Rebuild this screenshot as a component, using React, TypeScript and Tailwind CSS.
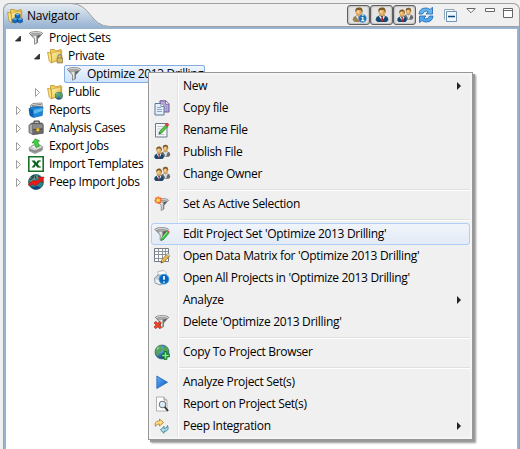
import React from "react";

type IconProps = { children: React.ReactNode };

function Icon({ children }: IconProps) {
  return (
    <svg width="16" height="16" viewBox="0 0 16 16" className="block shrink-0 overflow-visible">
      {children}
    </svg>
  );
}

function Defs() {
  return (
    <svg width="0" height="0" className="absolute">
      <defs>
        <linearGradient id="steel" x1="0" x2="1">
          <stop offset="0" stopColor="#686868" />
          <stop offset=".45" stopColor="#f2f2f2" />
          <stop offset=".65" stopColor="#5a5a5a" />
          <stop offset="1" stopColor="#4d4d4d" />
        </linearGradient>
        <linearGradient id="gold" x1="0" x2="1" y2="1">
          <stop offset="0" stopColor="#fff3b0" />
          <stop offset="1" stopColor="#e8b93a" />
        </linearGradient>
        <linearGradient id="play" x1="0" x2="1" y2="1">
          <stop offset="0" stopColor="#62b0f8" />
          <stop offset="1" stopColor="#0a5cc8" />
        </linearGradient>
        <linearGradient id="tab" x1="0" x2="0" y1="0" y2="1">
          <stop offset="0" stopColor="#e6edf5" />
          <stop offset="1" stopColor="#99b4d1" />
        </linearGradient>
        <radialGradient id="globe" cx=".35" cy=".3" r=".8">
          <stop offset="0" stopColor="#9fcdf5" />
          <stop offset=".5" stopColor="#3474b8" />
          <stop offset="1" stopColor="#123968" />
        </radialGradient>
      </defs>
    </svg>
  );
}

function FunnelShape() {
  return (
    <>
      <path d="M1.500 3.500 6.500 9v5.200l3-1.500V9l5-5.500z" fill="url(#steel)" stroke="#666" strokeWidth=".7" />
      <ellipse cx="8" cy="3.400" rx="6.600" ry="1.800" fill="#e9e9e9" stroke="#777" strokeWidth=".8" />
      <ellipse cx="8" cy="3.700" rx="4.800" ry="1" fill="#a3a3a3" />
    </>
  );
}

const Funnel = () => (
  <Icon>
    <FunnelShape />
  </Icon>
);

function FolderShape() {
  return (
    <>
      <path d="M3.500 4V1.500h4l1 1.500 5.500-1.500.7 1v9L4 14.500z" fill="#f2cc5b" stroke="#b78a1e" strokeWidth=".7" />
      <path d="M4.500 5 13.700 3v8.500L4.700 14.600z" fill="url(#gold)" stroke="#c99b28" strokeWidth=".6" />
      <path d="M.6 4.200 4 5.300l.8 9.800-2.600-2z" fill="#ffe780" stroke="#b88a1a" strokeWidth=".7" />
    </>
  );
}

const NavIcon = () => (
  <Icon>
    <FolderShape />
    <path d="m10.500 5.500 2.500 1v3l-2.500 1-2.500-1v-3zM8 10l2.500 1v3L8 15l-2.500-1v-3zM13 10l2.500 1v3L13 15l-2.500-1v-3z" fill="#1469bd" stroke="#073e83" strokeWidth=".5" />
    <path d="m8 6.500 2.500-1 2.500 1-2.500 1zM5.500 11 8 10l2.500 1L8 12zM10.500 11l2.500-1 2.500 1-2.500 1z" fill="#61b7ef" />
  </Icon>
);

const PrivateFolder = () => (
  <Icon>
    <FolderShape />
    <path d="M11 10V8.500a1.800 1.800 0 0 1 3.600 0V10" fill="none" stroke="#888" strokeWidth="1.200" />
    <path d="M10.200 10h5.300v5h-5.300z" fill="#c9b15a" stroke="#7d6c2c" strokeWidth=".6" />
    <path d="M11 11.500h4M11 13h4" stroke="#e8d48c" strokeWidth=".6" />
  </Icon>
);

function GlobeShape({ small = false }: { small?: boolean }) {
  return (
    <g transform={small ? "translate(7.500 7.500) scale(.54)" : undefined}>
      <circle cx="8" cy="8" r="7" fill="url(#globe)" stroke="#315e75" strokeWidth=".7" />
      <path d="M2 5c2-3 4-4 6-4l-1 3 2 1-2 3-3-.5L5 10l-1 3C1.500 10 1 7.500 2 5zM10 3l2-1c3 2 3.500 7 1 10l-3 .5-1-2 2-2-1.500-2.500z" fill="#52a551" />
      <path d="m3 4 2-1 .5 1L3 6z" fill="#a7d691" />
    </g>
  );
}

const PublicFolder = () => (
  <Icon>
    <FolderShape />
    <GlobeShape small />
  </Icon>
);

const ReportsIcon = () => (
  <Icon>
    <path d="M2.500 6V3.500L5 1.500l9-.5.500 5z" fill="#eee" stroke="#777" strokeWidth=".8" />
    <path d="m3.500 3.500 9.500-1M3.500 5l10-.8" stroke="#777" />
    <path d="M1 6.500 4.500 5H15l-.8 8.500-8.700 2-3.500-2z" fill="#1c86da" stroke="#0867ae" strokeWidth=".7" />
    <path d="M5.500 8 14.800 6l-.4 3-8.700 3z" fill="#5bb9f0" />
    <path d="M1 6.500 5.300 8v7.500L2 13.500z" fill="#0a5faf" />
  </Icon>
);

const CaseIcon = () => (
  <Icon>
    <path d="M6 3.500V2q0-.8.800-.8h3.700q.8 0 .8.800v1.500" fill="none" stroke="#464646" strokeWidth="1.200" />
    <path d="M1 5.500 3.500 3H14l1.200 1.500v8.700L5 14.700 1 12.500z" fill="#6a6a6a" stroke="#474747" strokeWidth=".7" />
    <path d="m1.500 5.700 2.700-2v10.300L1.500 12.300z" fill="#aaa" />
    <path d="M4.800 4.300h9.700v4.300l-9.700.7z" fill="#8b8b8b" />
    <path d="m4.800 9.500 9.900-.7" stroke="#333" strokeWidth=".6" />
    <path d="M8.300 8.300h3v2.500l-1.500 1-1.500-1z" fill="#ffc733" stroke="#a67613" strokeWidth=".4" />
  </Icon>
);

const ExportIcon = () => (
  <Icon>
    <path d="m1 10 4-3h7l3 2-1 3.500-7 3L1.500 13z" fill="#d2d2d2" stroke="#888" strokeWidth=".8" />
    <path d="m1.500 10.500 5.500 2 7-3v2.500l-7 3-5.500-2.500z" fill="#8d8d8d" />
    <path d="m4 9 4-2 5 1.500-5.500 2z" fill="#eee" />
    <path d="M4 5 7.500.8 11.500 3l-2 .7 2 4.500-3.500 1.300-2-5z" fill="#42d342" stroke="#188d22" strokeWidth=".7" />
  </Icon>
);

const ExcelIcon = () => (
  <Icon>
    <path d="M.8.8h14.400v14.400H.800z" fill="#fff" stroke="#167326" strokeWidth="1.600" />
    <path d="M3.500 4.500h3.300L8.200 6.800 9.700 4.500h2.800L9.600 8l2.900 3.500H9.200L7.700 9.300 6.300 11.500H3.500L6.500 8z" fill="#08621b" />
    <path d="M10.500 5H13M10.800 11H13" stroke="#3b8149" />
  </Icon>
);

const PeepIcon = () => (
  <Icon>
    <circle cx="8" cy="8" r="7.500" fill="#298483" stroke="#164a4f" strokeWidth=".7" />
    <path d="m2 4 3-2 4-.5 1 2-3 1.500-2 3L2 7zM8 2l4-.5L15 5l-2 1-3-1z" fill="#7a9a8e" />
    <path d="M3 3 6 1.500M10 2l3 2M2 6l4-3M7 1.500l1 3" stroke="#173b4b" strokeWidth="1.200" />
    <path d="m2 11.500 4 1.500 3-1 4 1.500-4 1.700H6z" fill="#123e80" />
    <path d="m.5 10 5-4L7.500 7.500l4-2.500-1.500-1.500 6-.5-2 6-1.300-1.500-5.700 4.500-2-2-4 2z" fill="#f01717" stroke="#9d1010" strokeWidth=".5" />
  </Icon>
);

function PersonShape({ grey = false, gold = false }: { grey?: boolean; gold?: boolean }) {
  return (
    <>
      <path d="M1.500 13 2.500 10 6 8.300h4L13.500 10l1 3-2 2h-9z" fill={grey ? "#6c6c6c" : gold ? "#9b8352" : "#17486f"} />
      <path d="m6 8.500 2 2 2-2 1 1-2.800 4.500L5 9.500z" fill="#e4edf5" />
      <path d="m7.500 9.500 1.200.1.600 4-1.200 1.400-1-1.400z" fill={grey ? "#ddd" : "#b62128"} />
      <ellipse cx="8" cy="4.800" rx="3.400" ry="4.200" fill="#dba55d" />
      <path d="M4.500 5Q3.500 1 7 .8q4-1.400 4.700 3L11.300 6 10 3 6.500 3z" fill="#7a5a2a" />
      <path d="M5.700 3.500 8.500 3v4L6 6z" fill="#f5cf8c" />
    </>
  );
}

const People = () => (
  <Icon>
    <g transform="translate(5.600 .3) scale(.74 .83)"><PersonShape grey /></g>
    <g transform="translate(-1 2) scale(.76 .87)"><PersonShape /></g>
  </Icon>
);
const Person = () => <Icon><PersonShape /></Icon>;
const PersonInfo = () => (
  <Icon>
    <PersonShape gold />
    <circle cx="11.500" cy="11.500" r="4.200" fill="#1f72b5" stroke="#a7cce5" strokeWidth=".7" />
    <path d="M10.500 10.500h1.300v3M10.300 13.700h3M11.200 8.500h1.200" stroke="white" strokeWidth="1.200" fill="none" />
  </Icon>
);

const CopyIcon = () => (
  <Icon>
    <path d="M6 .8h6l3 3V12H6z" fill="#b7a6d8" stroke="#705796" />
    <path d="M11.500 1v3.300H15" fill="#eee" stroke="#705796" strokeWidth=".7" />
    <path d="M1 3.500h6l3 3V15H1z" fill="#e5eff9" stroke="#5d789b" />
    <path d="M7 3.500v3h3" fill="#fff" stroke="#5d789b" strokeWidth=".8" />
    <path d="M3 7.500h4M3 9.500h5M3 11.500h5M12.500 6.500v4" stroke="#8ba4c2" />
  </Icon>
);

const RenameIcon = () => (
  <Icon>
    <path d="M1.500 1.500h11.500v13.500H1.500z" fill="#f4f6f8" stroke="#6b7889" />
    <path d="M3.500 4.500h6M3.500 7h4M3.500 10h3M3.500 12.500h7" stroke="#b9c8da" />
    <path d="m5 12 1-3 6-6.500 2 1.800-6.300 6.700z" fill="#55c63c" stroke="#2f832a" strokeWidth=".7" />
    <path d="m11.300 3 1.300-1.500q1.500-.6 2.200 1.200l-1.500 1.800z" fill="#ee493e" stroke="#b32121" strokeWidth=".6" />
    <path d="m5 12 .6-1.600 1.200 1.100z" fill="#27332a" />
  </Icon>
);

const ActiveIcon = () => (
  <Icon>
    <g transform="translate(1.500 1) scale(.88 .95)"><FunnelShape /></g>
    <circle cx="4.200" cy="4.200" r="3.600" fill="#f58a4a" opacity=".6" />
    <path d="m4.200.3 1 1.900 2-.8-.8 2 2 .8-2 .9.8 2-2-.8-1 2-1-2-2 .8.800-2-2-.9 2-.8-.8-2 2 .8z" fill="#ef5720" />
    <circle cx="4.200" cy="4.200" r="2" fill="#ffd654" />
  </Icon>
);

const EditIcon = () => (
  <Icon>
    <g transform="translate(-.3 0)"><FunnelShape /></g>
    <path d="m7 14.800 1-3.300 4.800-6.300 2.300 1.700-5.300 6.500z" fill="#39be43" stroke="#1f8730" strokeWidth=".6" />
    <path d="m12.800 5.200 1-.9 1.900 1.500-.6 1.200z" fill="#ed3f37" />
    <path d="m8.500 11.800 4.700-6" stroke="#9cf297" />
  </Icon>
);

const MatrixIcon = () => (
  <Icon>
    <path d="M.5.500h14v13H.500z" fill="#fff" stroke="#707985" />
    <path d="M4.500.5v13M8.500.5v13M11.500.5v13M.5 3.500h14M.5 6.500h14M.5 10.500h14" stroke="#8b929b" />
    <path d="m7 15 .7-3 5.500-6.200L15.500 8 10 14z" fill="#e7bd52" stroke="#98732c" strokeWidth=".8" />
    <path d="m12.500 6.500 1.200-1.200L16 7.300 14.900 8.500z" fill="#d9d9d9" stroke="#888" strokeWidth=".4" />
    <path d="m7 15 .4-1.700 1.200 1.200z" fill="#333" />
  </Icon>
);

const OpenIcon = () => (
  <Icon>
    <path d="M4 6V1.500l6-1 2 2V7" fill="#fff" stroke="#9aaaba" strokeWidth=".8" />
    <path d="m.5 8 3.500-3h8l1 7-7 3-5-2z" fill="#c1cad4" stroke="#808c99" strokeWidth=".8" />
    <path d="m1.500 9 4.500 1.500v3.700L1.500 12.500z" fill="#edf1f5" />
    <circle cx="10" cy="9.200" r="4.900" fill="#0867bb" stroke="#389ce5" strokeWidth=".8" />
    <path d="M10 6v3.800M10 11.400v1.300" stroke="white" strokeWidth="1.700" />
  </Icon>
);

const DeleteIcon = () => (
  <Icon>
    <FunnelShape />
    <path d="m.8 8 6 6m0-6-6 6" stroke="#9e2119" strokeWidth="3" />
    <path d="m1 8.200 5.600 5.600m0-5.600L1 13.800" stroke="#f34b2a" strokeWidth="1.700" />
  </Icon>
);

const GlobePlus = () => (
  <Icon>
    <GlobeShape />
    <path d="M10 7.500h3V10h2.500v3H13v2.500h-3V13H7.500v-3H10z" fill="#31a849" stroke="#11702d" strokeWidth=".7" />
    <path d="M11.500 8.500v6M8.500 11.500h6" stroke="#9be3a2" />
  </Icon>
);

const PlayIcon = () => <Icon><path d="m2.800 2 10.700 6.300L2.800 14.500z" fill="url(#play)" stroke="#1257b2" strokeWidth=".7" /></Icon>;

const SearchReport = () => (
  <Icon>
    <path d="M2.500 1h7.500l3 3v11H2.500z" fill="#fff" stroke="#b0b0b0" />
    <path d="M10 1v3h3" fill="#ddd" stroke="#999" />
    <circle cx="8.500" cy="8.500" r="3.200" fill="#d6e9f6" stroke="#777" strokeWidth="1.100" />
    <path d="m10.800 11 3.200 4" stroke="#333" strokeWidth="1.900" />
    <path d="m6.900 8 1.400-1.100" stroke="#fff" />
  </Icon>
);

const PeepMenu = () => (
  <Icon>
    <path d="M1.500 8.500Q-.2 3.500 4.500 3h1V1l4 3.500-4 3.500V6H4.500Q2.300 6 1.500 8.500z" fill="#ffdf87" stroke="#b8842d" strokeWidth=".9" />
    <path d="M13.500 7.500q2 5-2.500 5.800h-1v2L6.500 12 10 8.300v2h1q2 0 2.500-2.800z" fill="#a9dbe8" stroke="#427f95" strokeWidth=".9" />
  </Icon>
);

type Node = {
  label: string;
  icon: React.ReactNode;
  state?: "open" | "closed";
  indent: string;
  selected?: boolean;
};

const nodes: Node[] = [
  { label: "Project Sets", icon: <Funnel />, state: "open", indent: "pl-[8px]" },
  { label: "Private", icon: <PrivateFolder />, state: "open", indent: "pl-[27px]" },
  { label: "Optimize 2013 Drilling", icon: <Funnel />, indent: "pl-[58px]", selected: true },
  { label: "Public", icon: <PublicFolder />, state: "closed", indent: "pl-[27px]" },
  { label: "Reports", icon: <ReportsIcon />, state: "closed", indent: "pl-[8px]" },
  { label: "Analysis Cases", icon: <CaseIcon />, state: "closed", indent: "pl-[8px]" },
  { label: "Export Jobs", icon: <ExportIcon />, state: "closed", indent: "pl-[8px]" },
  { label: "Import Templates", icon: <ExcelIcon />, state: "closed", indent: "pl-[8px]" },
  { label: "Peep Import Jobs", icon: <PeepIcon />, state: "closed", indent: "pl-[8px]" },
];

function TreeRow({ node }: { node: Node }) {
  return (
    <div className={`flex h-[18px] items-center ${node.indent}`}>
      {node.state && (
        <svg width="10" height="16" viewBox="0 0 10 16" className="mr-[4px] shrink-0">
          {node.state === "open" ? (
            <path d="M6.500 6v5h-5z" fill="#333" stroke="#222" strokeWidth=".8" />
          ) : (
            <path d="m2.500 4.500 4 4-4 4z" fill="#fff" stroke="#a0a0a0" />
          )}
        </svg>
      )}
      <div className={node.selected ? "flex h-[18px] w-[141px] items-center rounded-[2px] border border-[#84acdd] bg-gradient-to-b from-[#edf5fe] to-[#cfe3fc] pl-[1px]" : "flex items-center"}>
        {node.icon}
        <span className="ml-[5px] whitespace-nowrap leading-[18px] tracking-[-0.33px]">{node.label}</span>
      </div>
    </div>
  );
}

type Item = { label: string; icon?: React.ReactNode; more?: boolean; active?: boolean };

const groups: Item[][] = [
  [
    { label: "New", more: true },
    { label: "Copy file", icon: <CopyIcon /> },
    { label: "Rename File", icon: <RenameIcon /> },
    { label: "Publish File", icon: <People /> },
    { label: "Change Owner", icon: <People /> },
  ],
  [{ label: "Set As Active Selection", icon: <ActiveIcon /> }],
  [
    { label: "Edit Project Set 'Optimize 2013 Drilling'", icon: <EditIcon />, active: true },
    { label: "Open Data Matrix for 'Optimize 2013 Drilling'", icon: <MatrixIcon /> },
    { label: "Open All Projects in 'Optimize 2013 Drilling'", icon: <OpenIcon /> },
    { label: "Analyze", more: true },
    { label: "Delete 'Optimize 2013 Drilling'", icon: <DeleteIcon /> },
  ],
  [{ label: "Copy To Project Browser", icon: <GlobePlus /> }],
  [
    { label: "Analyze Project Set(s)", icon: <PlayIcon /> },
    { label: "Report on Project Set(s)", icon: <SearchReport /> },
    { label: "Peep Integration", icon: <PeepMenu />, more: true },
  ],
];

function MenuRow({ item }: { item: Item }) {
  return (
    <div className={item.active ? "flex h-[22px] items-center rounded-[3px] border border-[#aecff7] bg-gradient-to-b from-[#f0f4fa] to-[#e4ebf6] pl-[2px] pr-[8px]" : "flex h-[22px] items-center pl-[3px] pr-[9px]"}>
      <div className="mr-[13px] w-[16px]">{item.icon}</div>
      <span className="whitespace-nowrap leading-[20px] tracking-[-0.32px]">{item.label}</span>
      {item.more && (
        <svg width="4" height="8" viewBox="0 0 4 8" className="ml-auto"><path d="M0 0v8l4-4z" fill="#222" /></svg>
      )}
    </div>
  );
}

function ContextMenu() {
  return (
    <div className="absolute left-[148px] top-[72px] h-[368px] w-[325px] border border-[#979797] bg-[#f5f5f5] p-[2px] shadow-[2px_2px_0_#999,3px_3px_2px_#00000066]">
      <div className="h-[362px] bg-[linear-gradient(to_right,#f0f0f0_26px,#e2e3e3_26px,#e2e3e3_27px,#fff_27px,#fff_28px,#f0f0f0_28px)]">
        {groups.map((group, i) => (
          <React.Fragment key={i}>
            {i > 0 && (
              <div className="flex h-[8px] items-center pl-[28px] pt-[2px]">
                <div className="h-[2px] w-full border-b border-t border-b-white border-t-[#e0e0e0]" />
              </div>
            )}
            {group.map((item) => <MenuRow item={item} key={item.label} />)}
          </React.Fragment>
        ))}
      </div>
    </div>
  );
}

function ToolButton({ children }: { children: React.ReactNode }) {
  return <div className="flex h-[20px] w-[23px] items-center justify-center rounded-[3px] border border-[#606060] bg-[#e5e5e5] shadow-[inset_0_0_2px_#777]">{children}</div>;
}

function Header() {
  return (
    <div className="flex h-[23px] justify-between">
      <div className="relative w-[115px]">
        <svg width="517" height="24" viewBox="0 0 517 24" className="absolute left-[-1px] top-[-1px] max-w-none">
          <path d="M.5 24V6L2 2.500 6 .5h62c20 0 19 23 39 23V24z" fill="url(#tab)" />
          <path d="M.5 24V6L2 2.500 6 .5h62c20 0 19 23 39 23H516" fill="none" stroke="#a0a0a0" />
        </svg>
        <div className="relative flex items-center pl-[3px] pt-[3px]">
          <NavIcon />
          <span className="ml-[4px] leading-[18px] tracking-[-0.2px]">Navigator</span>
        </div>
      </div>
      <div className="relative flex items-start pr-[6px] pt-[1px]">
        <ToolButton><PersonInfo /></ToolButton>
        <ToolButton><Person /></ToolButton>
        <ToolButton><People /></ToolButton>
        <svg width="16" height="16" viewBox="0 0 16 16" className="ml-[2px] mt-[2px]">
          <path d="M1 7Q1.500 1 8 1q2.500 0 4 1.500L14.500.3V7H8l2.200-2.200Q6.500 2.700 4.500 7z" fill="#65b5ed" stroke="#1d62b4" strokeWidth=".8" />
          <path d="M15 9q-.5 6-7 6-2.500 0-4-1.500L1.500 15.700V9H8l-2.200 2.200q3.700 2.100 5.700-2.200z" fill="#4fa8eb" stroke="#1d62b4" strokeWidth=".8" />
        </svg>
        <svg width="13" height="13" viewBox="0 0 13 13" className="ml-[10px] mt-[4px]">
          <path d="M.5 10.500V.5H10v2" fill="#f4fafe" stroke="#8daabd" />
          <path d="M2.500 2.500h10v10h-10z" fill="#edf9ff" stroke="#7694ad" />
          <path d="M4 7.500h7" stroke="#0b477d" strokeWidth="1.500" />
        </svg>
        <svg width="10" height="6" viewBox="0 0 10 6" className="ml-[9px] mt-[3px]"><path d="M.8.500h8.400L5 4.700z" fill="#fff" stroke="#666" /></svg>
        <svg width="10" height="4" viewBox="0 0 10 4" className="ml-[9px] mt-[3px]"><path d="M.5.500h9v3h-9z" fill="#fff" stroke="#666" /></svg>
        <svg width="10" height="10" viewBox="0 0 10 10" className="ml-[8px] mt-[3px]"><path d="M.5.500h9v9h-9zM.5 2.500h9" fill="#fff" stroke="#666" /></svg>
      </div>
    </div>
  );
}

export default function App() {
  return (
    <main className="relative h-[449px] w-[520px] overflow-hidden bg-[#f0f0f0] pl-[3px] pt-[3px] text-[12px] text-black [font-family:'Open_Sans','Noto_Sans',sans-serif]">
      <Defs />
      <section className="h-[446px] w-[517px] rounded-t-[7px] border border-b-0 border-[#a0a0a0]">
        <Header />
        <div className="h-[422px] border-x-2 border-t-2 border-[#99b4d1] bg-white">
          {nodes.map((node) => <TreeRow node={node} key={node.label} />)}
        </div>
      </section>
      <ContextMenu />
    </main>
  );
}
